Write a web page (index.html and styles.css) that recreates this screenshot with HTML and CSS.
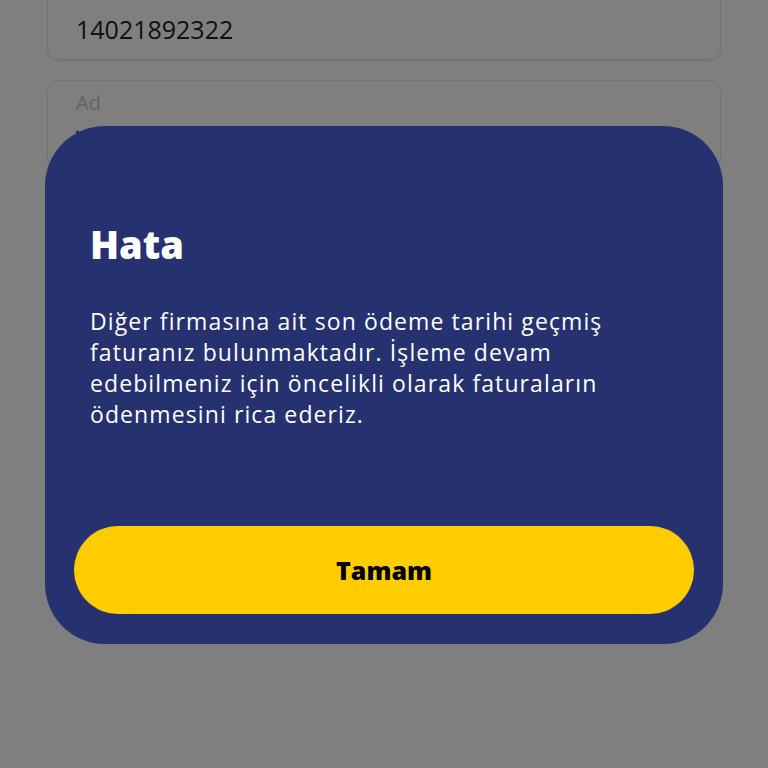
FILE: index.html
```html
<!DOCTYPE html>
<html lang="tr">
<head>
   <meta charset="UTF-8">
   <meta name="viewport" content="width=device-width, initial-scale=1.0">
   <link rel="stylesheet" href="styles.css">
</head>
<body>
   <div class="form">
      <div class="field field-top">
         <span class="field-value">14021892322</span>
      </div>
      <div class="field">
         <span class="field-label">Ad</span>
         <span class="field-value field-value-low">Yusuf</span>
      </div>
   </div>

   <div class="overlay">
      <div class="dialog">
         <h2 class="dialog-title">Hata</h2>
         <p class="dialog-text">
            Diğer firmasına ait son ödeme tarihi geçmiş<br>
            faturanız bulunmaktadır. İşleme devam<br>
            edebilmeniz için öncelikli olarak faturaların<br>
            ödenmesini rica ederiz.
         </p>
         <button class="dialog-btn">Tamam</button>
      </div>
   </div>
</body>
</html>
```

FILE: styles.css
```css
body {
   margin: 0;
   padding: 0;
   background-color: #ffffff;
   font-family: "Open Sans", Lato, sans-serif;
   overflow: hidden;
   height: 768px;
}
.form {
   display: flex;
   flex-direction: column;
   gap: 20px;
   padding: 0 47px;
   margin-top: -30px;
}
.field {
   display: flex;
   flex-direction: column;
   border: 1.5px solid #e4e4e4;
   border-radius: 12px;
   padding: 10px 28px;
   height: 90px;
   box-sizing: border-box;
   box-shadow: 0 1px 3px rgba(0, 0, 0, 0.08);
}
.field-top {
   justify-content: flex-end;
   padding-bottom: 14px;
}
.field-label {
   font-size: 20px;
   color: #c8c8c8;
   line-height: 24px;
}
.field-value {
   font-size: 25px;
   color: #222;
   line-height: 32px;
}
.field-value-low {
   margin-top: 8px;
}
.overlay {
   position: fixed;
   inset: 0;
   background-color: rgba(0, 0, 0, 0.5);
   display: flex;
   justify-content: center;
   align-items: flex-start;
   padding-top: 126px;
}
.dialog {
   width: 678px;
   box-sizing: border-box;
   background-color: #263170;
   border-radius: 60px;
   padding: 96px 29px 30px;
   display: flex;
   flex-direction: column;
}
.dialog-title {
   margin: 0 0 0 16px;
   color: #fff;
   font-size: 38px;
   font-weight: 800;
   line-height: 44px;
}
.dialog-text {
   margin: 40px 0 0 16px;
   color: #fff;
   font-size: 23px;
   line-height: 31px;
   letter-spacing: 1.1px;
   height: 156px;
}
.dialog-btn {
   margin-top: 64px;
   height: 88px;
   border: none;
   border-radius: 44px;
   background-color: #ffcc00;
   color: #000;
   font-family: inherit;
   font-size: 25px;
   font-weight: 800;
   cursor: pointer;
}
```
